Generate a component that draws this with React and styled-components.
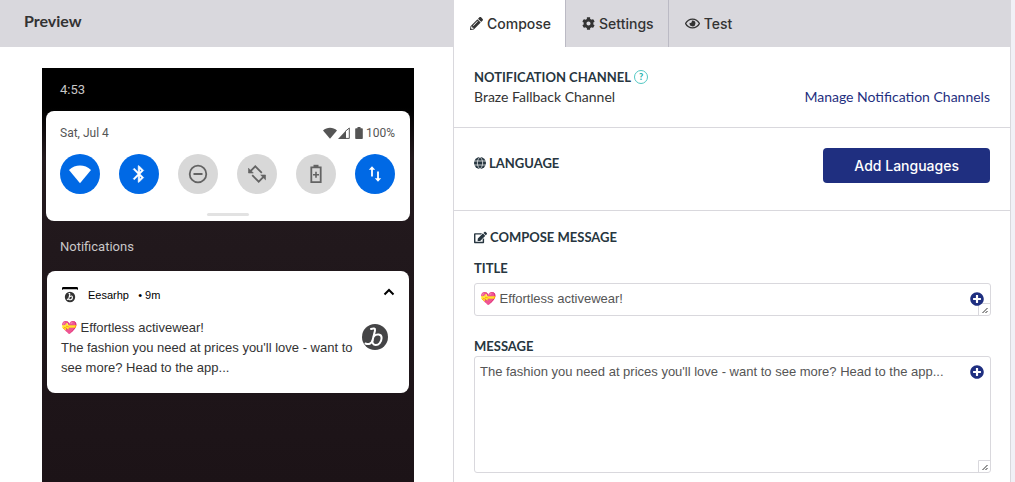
import { useState } from "react";
import styled, { createGlobalStyle, css } from "styled-components";
import {
  FaPencilAlt,
  FaCog,
  FaRegEye,
  FaEdit,
  FaPlusCircle,
} from "react-icons/fa";

const GlobalStyle = createGlobalStyle`
  * {
    box-sizing: border-box;
  }
  body {
    margin: 0;
    background-color: #f1f0f6;
    color: #333;
    font-family: Lato, "Open Sans", sans-serif;
    font-size: 14px;
    line-height: 20px;
  }
  h1, h2, p {
    margin: 0;
  }
  button, textarea {
    font: inherit;
    color: inherit;
  }
`;

const Page = styled.div`
  display: grid;
  grid-template-columns: 453fr 558fr;
  min-height: 100vh;
  padding-right: 4px;
`;

/* preview */
const PreviewPane = styled.section`
  display: flex;
  flex-direction: column;
  background-color: #fff;
`;
const PreviewHeader = styled.header`
  height: 47px;
  padding: 11px 24px;
  background-color: #d9d8dd;
`;
const PreviewTitle = styled.h1`
  font-size: 16px;
  line-height: 20px;
  font-weight: 700;
`;
const Phone = styled.div`
  flex: 1;
  margin: 21px 39px 0 42px;
  padding: 0 4px;
  background: linear-gradient(#000 0, #000 40px, #231a1e 90px, #1c1317 100%);
  font-family: Roboto, sans-serif;
  font-size: 12px;
`;
const Clock = styled.p`
  padding: 12px 14px 11px;
  font-size: 13px;
  line-height: 20px;
  color: #c9c7c8;
`;
const PhoneHeading = styled.h2`
  padding: 16px 14px 14px;
  font-size: 13px;
  line-height: 20px;
  font-weight: 400;
  color: #c9c7c8;
`;
const QuickSettings = styled.div`
  height: 110px;
  padding: 12px 15px 5px 14px;
  display: flex;
  flex-direction: column;
  border-radius: 8px;
  background-color: #fff;
  color: #555;
`;
const QuickTop = styled.div`
  display: flex;
  justify-content: space-between;
`;
const DeviceStatus = styled.span`
  display: flex;
  align-items: center;
  gap: 3px;
`;
const Signals = styled.span`
  display: flex;
  align-items: center;
  gap: 1px;
  margin-right: 2px;
`;
const Toggles = styled.div`
  display: flex;
  justify-content: space-between;
  margin-top: 11px;
`;
const Toggle = styled.button`
  width: 40px;
  height: 40px;
  padding: 0;
  border: 0;
  border-radius: 50%;
  display: flex;
  align-items: center;
  justify-content: center;
  background-color: ${({ $on }) => ($on ? "#0069e5" : "#d8d8d8")};
  color: ${({ $on }) => ($on ? "#fff" : "#636363")};
`;
const Handle = styled.div`
  width: 42px;
  height: 3px;
  margin: auto auto 0;
  border-radius: 2px;
  background-color: #e2e2e2;
`;
const Notification = styled.article`
  margin: 0 1px;
  padding: 14px;
  min-height: 122px;
  border-radius: 8px;
  background-color: #fff;
  font-family: "Liberation Sans", Arial, sans-serif;
  font-size: 13px;
`;
const NotificationTop = styled.div`
  display: flex;
  align-items: center;
  gap: 10px;
  padding-left: 1px;
  font-size: 11px;
  color: #000;
  > :last-child {
    margin-left: auto;
  }
`;
const NotificationBody = styled.div`
  display: flex;
  justify-content: space-between;
  align-items: flex-start;
  margin-top: 13px;
  > svg {
    flex: none;
    margin: 6px 7px 0 0;
  }
`;
const Collapse = styled.button`
  padding: 0 0 6px;
  border: 0;
  background: none;
  display: flex;
`;

/* editor */
const Editor = styled.section`
  background-color: #fff;
  border: solid #d9d8dd;
  border-width: 0 1px;
`;
const Tabs = styled.nav`
  display: flex;
  height: 47px;
  background-color: #d9d8dd;
`;
const Tab = styled.button`
  display: flex;
  align-items: center;
  gap: 4px;
  padding: 0 14px 0 16px;
  border: 0;
  border-right: 1px solid ${({ $last }) => ($last ? "transparent" : "#bbbac4")};
  background-color: ${({ $active }) => ($active ? "#fff" : "transparent")};
  font-family: Inter, sans-serif;
  font-size: 14px;
  font-weight: 500;
  cursor: pointer;
`;
const Section = styled.section`
  padding: 20px;
  border-bottom: 1px solid #d9d8dd;
  ${({ $split }) =>
    $split &&
    css`
      display: flex;
      justify-content: space-between;
      align-items: flex-start;
      padding-bottom: 27px;
    `}
`;
const Row = styled.div`
  display: flex;
  justify-content: space-between;
`;
const Heading = styled.h2`
  display: flex;
  align-items: center;
  gap: 3px;
  font-size: 13px;
  line-height: ${({ $tall }) => ($tall ? 30 : 20)}px;
  font-weight: 700;
  color: #273640;
`;
const Help = styled.button`
  width: 14px;
  height: 14px;
  padding: 0;
  border: 1px solid #52c8c3;
  border-radius: 50%;
  background: none;
  color: #23b1ab;
  font-size: 9px;
  line-height: 12px;
  font-weight: 900;
`;
const ManageLink = styled.a`
  color: #1f2f80;
  text-decoration: none;
`;
const AddButton = styled.button`
  height: 35px;
  padding: 0 31px;
  border: 0;
  border-radius: 4px;
  background-color: #1f2f80;
  color: #fff;
  font-family: Inter, sans-serif;
  font-size: 14px;
  font-weight: 500;
`;
const ComposeForm = styled.form`
  padding: 16px 19px 9px 20px;
`;
const Label = styled.label`
  display: block;
  margin-top: ${({ $gap }) => $gap}px;
  font-size: 13px;
  line-height: 20px;
  font-weight: 700;
  color: #273640;
`;
const Field = styled.div`
  position: relative;
  display: flex;
  height: ${({ $height }) => $height}px;
  margin-top: ${({ $gap }) => $gap || 0}px;
  border: 1px solid #d9d8dd;
  border-radius: 3px;
  font-family: "Liberation Sans", Arial, sans-serif;
  font-size: 13px;
  color: #555;
`;
const TextArea = styled.textarea`
  flex: 1;
  padding: 5px 30px 0 5px;
  border: 0;
  outline: 0;
  resize: none;
  overflow: hidden;
  background: none;
  line-height: 20px;
`;
const Insert = styled.button`
  position: absolute;
  top: 8px;
  right: 6px;
  padding: 0;
  border: 0;
  background: none;
  color: #1f2f80;
  display: flex;
  z-index: 1;
`;
const Grip = styled.svg`
  position: absolute;
  right: 0;
  bottom: 0;
`;

const WifiIcon = ({ size }) => (
  <svg width={size} height={size} viewBox="0 0 24 24" fill="currentColor">
    <path d="M0 7.5C6.8 1.3 17.2 1.3 24 7.5L12 22z" />
  </svg>
);

const SignalIcon = () => (
  <svg width="12" height="12" viewBox="0 0 12 12">
    <path d="M0 12L8 3.500V12z" fill="currentColor" />
    <path
      d="M7.500 4.200L11.300 1V11.400H7"
      fill="none"
      stroke="currentColor"
      strokeWidth="1"
    />
  </svg>
);

const BatteryIcon = () => (
  <svg width="8" height="12" viewBox="0 0 8 12" fill="currentColor">
    <path d="M2.500 0h3v1.200H7a.8.8 0 0 1 .8.8v9.200a.8.8 0 0 1-.8.8H1a.8.8 0 0 1-.8-.8V2a.8.8 0 0 1 .8-.8h1.500z" />
  </svg>
);

const toggles = [
  { name: "Wi-Fi", on: true, icon: <WifiIcon size={22} /> },
  {
    name: "Bluetooth",
    on: true,
    icon: (
      <svg width="20" height="20" viewBox="0 0 24 24" fill="currentColor" stroke="currentColor" strokeWidth="0.600">
        <path d="M17.700 7.700L12 2h-1v7.600L6.400 5 5 6.400 10.600 12 5 17.600 6.400 19l4.600-4.600V22h1l5.700-5.700-4.300-4.300zM13 5.800l1.900 1.900L13 9.600zm1.900 10.500L13 18.200v-3.800z" />
      </svg>
    ),
  },
  {
    name: "Do not disturb",
    icon: (
      <svg width="20" height="20" viewBox="0 0 20 20" fill="none" stroke="currentColor" strokeWidth="1.800">
        <circle cx="10" cy="10" r="8.300" />
        <path d="M5.500 10h9" strokeWidth="2" />
      </svg>
    ),
  },
  {
    name: "Auto-rotate",
    icon: (
      <svg width="20" height="20" viewBox="0 0 20 20" fill="none" stroke="currentColor" strokeWidth="1.800">
        <path d="M14.800 8.800L8.300 2.300L3.300 7.300M5.200 11.200L11.700 17.700L16.700 12.700" />
        <path d="M1.500 4.200V9H6.300zM18.500 15.800V11H13.700z" fill="currentColor" strokeWidth="0.600" />
      </svg>
    ),
  },
  {
    name: "Battery saver",
    icon: (
      <svg width="12" height="20" viewBox="0 0 12 20" fill="none" stroke="currentColor" strokeWidth="1.800">
        <path d="M1.300 3.400h9.400v14.700H1.300z" />
        <path d="M3.500 2h5" strokeWidth="2.400" />
        <path d="M6 7.700v6M3 10.700h6" strokeWidth="1.600" />
      </svg>
    ),
  },
  {
    name: "Mobile data",
    on: true,
    icon: (
      <svg width="16" height="18" viewBox="0 0 16 18" fill="none" stroke="currentColor" strokeWidth="1.800">
        <path d="M5 11.500V3M11 6.500V15" />
        <path d="M1.800 4.800L5 1.200l3.200 3.600zM7.800 13.200L11 16.800l3.200-3.600z" fill="currentColor" stroke="none" />
      </svg>
    ),
  },
];

const BrandMark = ({ size }) => (
  <svg width={size} height={size} viewBox="0 0 26 26">
    <circle cx="13" cy="13" r="13" fill="#444446" />
    <g fill="none" stroke="#fff" strokeWidth="2" strokeLinecap="round">
      <path d="M9 5C11.500 4 13.500 4.300 13 6.500L10.600 16.300C9.600 19.800 6.500 20.900 3.500 19.500" />
      <path d="M11.800 12.200C14.500 9.700 19.600 9.700 19.600 14C19.500 18.200 16.700 21 13.700 20.900C11 20.800 10 18.600 10.500 16.500" />
    </g>
  </svg>
);

const AppIcon = () => (
  <svg width="16" height="16" viewBox="0 0 16 16">
    <path d="M0 3V1.200Q0 0 1.200 0H14.800Q16 0 16 1.200V3L14.800 2.200H1.200z" fill="#000" />
    <circle cx="8" cy="10" r="5.200" fill="#333" />
    <path
      d="M6.500 6.700q1.500-.5 1.300.6L6.900 11.200q-.4 1.400-2 1.200M7.400 9.800q2.900-1.800 3 .5t-2 2.400-1.500-1.600"
      fill="none"
      stroke="#fff"
      strokeWidth="1.100"
    />
  </svg>
);

const GlobeIcon = () => (
  <svg width="12" height="12" viewBox="0 0 12 12">
    <circle cx="6" cy="6" r="6" fill="currentColor" />
    <path
      d="M0 4h12M0 8h12M6 0C2.500 3 2.500 9 6 12M6 0c3.500 3 3.500 9 0 12"
      fill="none"
      stroke="#fff"
      strokeWidth="0.700"
    />
  </svg>
);

const ResizeGrip = () => (
  <Grip width="12" height="12" viewBox="0 0 12 12">
    <path d="M0.500 12V0.500H12" fill="#fff" stroke="#d9d8dd" />
    <path d="M4.500 10L9.500 5M7.500 10L9.500 8" stroke="#333" strokeWidth="1" />
  </Grip>
);

const tabs = [
  { name: "Compose", icon: <FaPencilAlt size={13} /> },
  { name: "Settings", icon: <FaCog size={13} /> },
  { name: "Test", icon: <FaRegEye size={15} /> },
];

function App() {
  const [active, setActive] = useState("Compose");
  const [title, setTitle] = useState("💝 Effortless activewear!");
  const [message, setMessage] = useState(
    "The fashion you need at prices you'll love - want to see more? Head to the app..."
  );

  return (
    <Page>
      <GlobalStyle />
      <PreviewPane>
        <PreviewHeader>
          <PreviewTitle>Preview</PreviewTitle>
        </PreviewHeader>
        <Phone>
          <Clock>4:53</Clock>
          <QuickSettings>
            <QuickTop>
              <span>Sat, Jul 4</span>
              <DeviceStatus>
                <Signals>
                  <WifiIcon size={14} />
                  <SignalIcon />
                </Signals>
                <BatteryIcon />
                100%
              </DeviceStatus>
            </QuickTop>
            <Toggles>
              {toggles.map(({ name, on, icon }) => (
                <Toggle key={name} type="button" aria-label={name} $on={on}>
                  {icon}
                </Toggle>
              ))}
            </Toggles>
            <Handle />
          </QuickSettings>
          <PhoneHeading>Notifications</PhoneHeading>
          <Notification>
            <NotificationTop>
              <AppIcon />
              <span>Eesarhp &nbsp; • 9m</span>
              <Collapse type="button" aria-label="Collapse">
                <svg width="12" height="8" viewBox="0 0 12 8">
                  <path d="M1.500 6.500L6 2L10.500 6.500" fill="none" stroke="#000" strokeWidth="2" />
                </svg>
              </Collapse>
            </NotificationTop>
            <NotificationBody>
              <div>
                <p>{title}</p>
                <p>{message}</p>
              </div>
              <BrandMark size={26} />
            </NotificationBody>
          </Notification>
        </Phone>
      </PreviewPane>

      <Editor>
        <Tabs>
          {tabs.map(({ name, icon }) => (
            <Tab
              key={name}
              type="button"
              $active={name === active}
              $last={name === "Test"}
              onClick={() => setActive(name)}
            >
              {icon}
              {name}
            </Tab>
          ))}
        </Tabs>
        <Section>
          <Heading>
            NOTIFICATION CHANNEL <Help type="button">?</Help>
          </Heading>
          <Row>
            <span>Braze Fallback Channel</span>
            <ManageLink href="#channels">Manage Notification Channels</ManageLink>
          </Row>
        </Section>
        <Section $split>
          <Heading $tall>
            <GlobeIcon /> LANGUAGE
          </Heading>
          <AddButton type="button">Add Languages</AddButton>
        </Section>
        <ComposeForm>
          <Heading>
            <FaEdit size={13} /> COMPOSE MESSAGE
          </Heading>
          <Label htmlFor="title" $gap={11}>
            TITLE
          </Label>
          <Field $height={33} $gap={5}>
            <TextArea
              id="title"
              value={title}
              onChange={(event) => setTitle(event.target.value)}
            />
            <Insert type="button" aria-label="Insert into title">
              <FaPlusCircle size={14} />
            </Insert>
            <ResizeGrip />
          </Field>
          <Label htmlFor="message" $gap={20}>
            MESSAGE
          </Label>
          <Field $height={117}>
            <TextArea
              id="message"
              value={message}
              onChange={(event) => setMessage(event.target.value)}
            />
            <Insert type="button" aria-label="Insert into message">
              <FaPlusCircle size={14} />
            </Insert>
            <ResizeGrip />
          </Field>
        </ComposeForm>
      </Editor>
    </Page>
  );
}

export default App;
